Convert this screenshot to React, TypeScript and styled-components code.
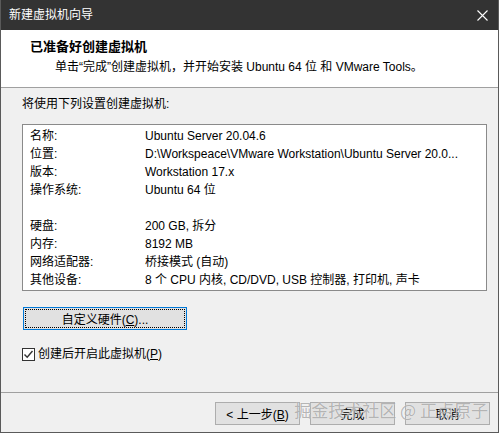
import React from 'react'
import styled, { createGlobalStyle } from 'styled-components'

const GlobalStyle = createGlobalStyle`
  html, body {
    margin: 0;
    padding: 0;
    background: #f0f0f0;
  }
  body {
    font-family: 'Liberation Sans', 'Noto Sans CJK SC', sans-serif;
    font-size: 12px;
    color: #000;
  }
`

const summary = [
  { label: '名称:', value: 'Ubuntu Server 20.04.6' },
  {
    label: '位置:',
    value: 'D:\\Workspeace\\VMware Workstation\\Ubuntu Server 20.0...',
  },
  { label: '版本:', value: 'Workstation 17.x' },
  { label: '操作系统:', value: 'Ubuntu 64 位' },
  null,
  { label: '硬盘:', value: '200 GB, 拆分' },
  { label: '内存:', value: '8192 MB' },
  { label: '网络适配器:', value: '桥接模式 (自动)' },
  { label: '其他设备:', value: '8 个 CPU 内核, CD/DVD, USB 控制器, 打印机, 声卡' },
]

export default function App() {
  return (
    <>
      <GlobalStyle />
      <Window>
        <TitleBar>
          <span>新建虚拟机向导</span>
          <svg width="11" height="11" viewBox="0 0 11 11">
            <path d="M0.5 0.5 L10.5 10.5 M10.5 0.5 L0.5 10.5" stroke="#fff" strokeWidth="1.1" />
          </svg>
        </TitleBar>
        <Header>
          <HeaderTitle>已准备好创建虚拟机</HeaderTitle>
          <HeaderText>单击“完成”创建虚拟机，并开始安装 Ubuntu 64 位 和 VMware Tools。</HeaderText>
        </Header>
        <Body>
          <Line>将使用下列设置创建虚拟机:</Line>
          <SummaryBox>
            {summary.map((row, i) =>
              row ? (
                <SummaryRow key={i}>
                  <span>{row.label}</span>
                  <span>{row.value}</span>
                </SummaryRow>
              ) : (
                <SummaryRow key={i} />
              )
            )}
          </SummaryBox>
          <CustomizeButton>
            自定义硬件(<u>C</u>)...
          </CustomizeButton>
          <CheckRow>
            <CheckBox>
              <svg width="11" height="11" viewBox="0 0 11 11">
                <path d="M1.5 5.5 L4.2 8.3 L9.5 2" fill="none" stroke="#333" strokeWidth="1.4" />
              </svg>
            </CheckBox>
            <span>创建后开启此虚拟机(<u>P</u>)</span>
          </CheckRow>
        </Body>
        <Footer>
          <DialogButton>
            &lt; 上一步(<u>B</u>)
          </DialogButton>
          <DialogButton>完成</DialogButton>
          <DialogButton>取消</DialogButton>
          <Watermark>掘金技术社区 @ 正点原子</Watermark>
        </Footer>
      </Window>
    </>
  )
}

const Window = styled.div`
  display: flex;
  flex-direction: column;
  width: 499px;
  height: 433px;
  box-sizing: border-box;
  border: 1px solid #5a5a5a;
  border-top: none;
  background: #f0f0f0;
`

const TitleBar = styled.div`
  display: flex;
  align-items: center;
  justify-content: space-between;
  height: 30px;
  flex-shrink: 0;
  padding: 0 10px 0 8px;
  background: #333;
  color: #fff;
  line-height: 18px;
  svg {
    margin-top: 1px;
  }
`

const Header = styled.div`
  height: 58px;
  box-sizing: border-box;
  flex-shrink: 0;
  padding: 8px 0 0 29px;
  background: #fff;
  border-bottom: 1px solid #a0a0a0;
`

const HeaderTitle = styled.div`
  font-size: 13px;
  font-weight: bold;
  line-height: 18px;
`

const HeaderText = styled.div`
  margin: 2px 0 0 25px;
  line-height: 18px;
  white-space: nowrap;
`

const Body = styled.div`
  flex: 1;
  display: flex;
  flex-direction: column;
  align-items: flex-start;
  padding: 7px 12px 0 21px;
  border-bottom: 1px solid #a0a0a0;
`

const Line = styled.div`
  line-height: 18px;
`

const SummaryBox = styled.div`
  width: 465px;
  box-sizing: border-box;
  margin-top: 11px;
  padding: 2px 0 1px 7px;
  background: #fff;
  border: 1px solid #8a8a8a;
`

const SummaryRow = styled.div`
  display: grid;
  grid-template-columns: 115px 1fr;
  height: 18px;
  line-height: 18px;
  white-space: nowrap;
`

const CustomizeButton = styled.button`
  width: 164px;
  height: 23px;
  margin: 16px 0 0 1px;
  padding: 0;
  font: inherit;
  color: #000;
  background: #e1e1e1;
  border: 1px solid #0078d7;
  outline: 1px dotted #000;
  outline-offset: -3px;
`

const CheckRow = styled.div`
  display: flex;
  align-items: center;
  gap: 3px;
  margin-top: 17px;
  line-height: 14px;
`

const CheckBox = styled.span`
  display: flex;
  align-items: center;
  justify-content: center;
  width: 13px;
  height: 13px;
  box-sizing: border-box;
  background: #fff;
  border: 1px solid #333;
`

const Footer = styled.div`
  position: relative;
  display: flex;
  justify-content: flex-end;
  align-items: flex-start;
  gap: 10px;
  height: 39px;
  flex-shrink: 0;
  box-sizing: border-box;
  padding: 9px 8px 0 0;
`

const DialogButton = styled.button`
  width: 85px;
  height: 23px;
  padding: 0;
  font: inherit;
  color: #000;
  background: #e1e1e1;
  border: 1px solid #adadad;
`

const Watermark = styled.div`
  position: absolute;
  right: 10px;
  top: 6px;
  font-family: 'Noto Sans CJK SC', sans-serif;
  font-size: 17px;
  line-height: 22px;
  color: rgba(120, 120, 120, 0.55);
  text-shadow: 0 0 1px rgba(255, 255, 255, 0.9);
  pointer-events: none;
  white-space: nowrap;
`
